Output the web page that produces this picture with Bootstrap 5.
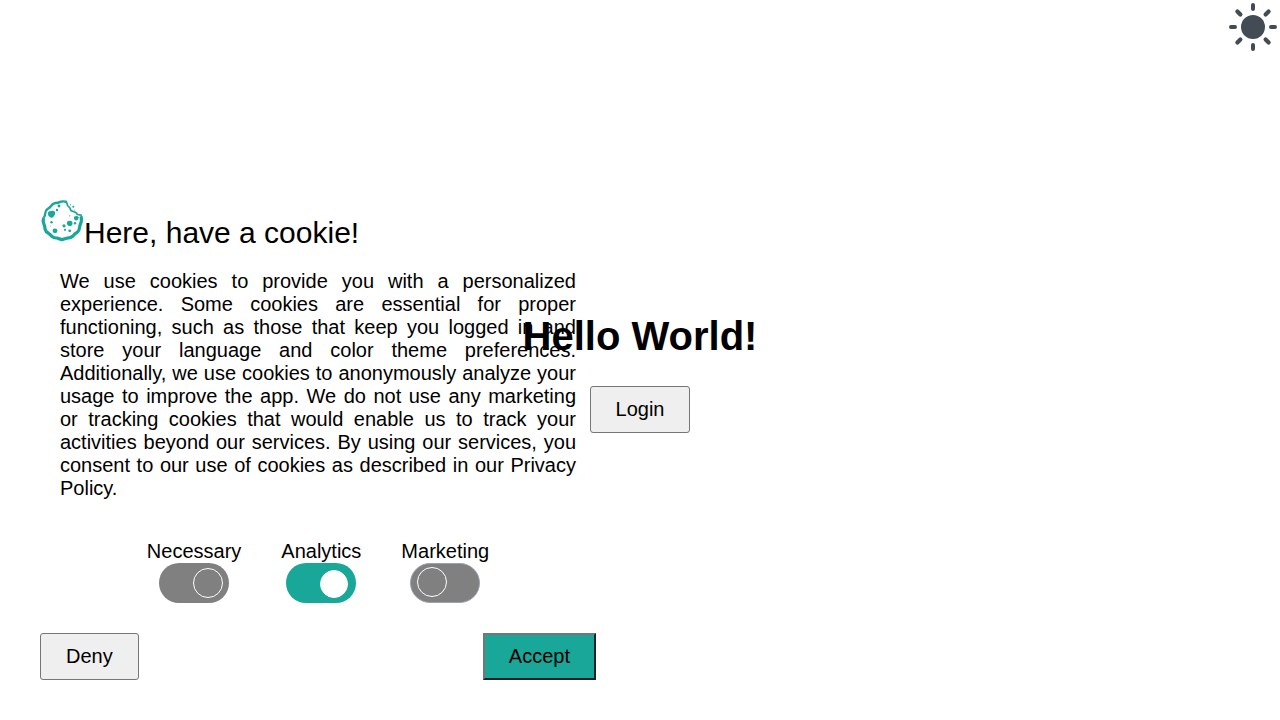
<!DOCTYPE html>
<html lang="en">
<head>
<meta charset="utf-8">
<meta name="viewport" content="width=device-width, initial-scale=1">
<title>Hello World</title>
<link href="https://cdn.jsdelivr.net/npm/bootstrap@5.3.0/dist/css/bootstrap.min.css" rel="stylesheet">
<style>
body { font-family: "Liberation Sans", Arial, sans-serif; font-size: 20px; line-height: 23px; color: #000; background: #fff; }
.theme-toggle { top: 3px; right: 3px; color: #434c54; line-height: 0; }
.hero { padding-top: 313px; }
.hero h1 { font-size: 40px; line-height: 46px; margin-bottom: 27px; }
.plain-btn { --bs-btn-font-size: 20px; --bs-btn-line-height: 23px; --bs-btn-padding-x: 25px; --bs-btn-padding-y: 11px; --bs-btn-border-radius: 3px; --bs-btn-bg: #efefef; --bs-btn-color: #000; --bs-btn-border-color: #767676; }
.accept-btn { --bs-btn-border-radius: 0; --bs-btn-padding-x: 24px; --bs-btn-padding-y: 10px; --bs-btn-bg: #18a798; border-width: 2px; border-color: #767676 #212121 #212121 #767676; }
.consent { left: 40px; bottom: 40px; width: 556px; }
.consent h2 { font-size: 30px; line-height: 34px; padding-top: 17px; }
.consent p { text-align: justify; padding: 0 20px; margin: 20px 0 40px; }
.consent-options { gap: 40px; margin-bottom: 30px; }
.pill { width: 70px; height: 40px; border-radius: 20px; background: #808080; padding: 5px 6px; }
.pill i { width: 30px; height: 30px; border: 1px solid #fff; border-radius: 50%; }
.pill-on { background: #18a798; padding-right: 8px; padding-top: 7px; }
.pill-on i { width: 28px; height: 28px; background: #fff; }
.pill-off { border: 1px solid #9ba4ad; padding: 3px 6px; }
</style>
</head>
<body>
<button class="theme-toggle position-absolute border-0 bg-transparent p-0" aria-label="Light theme">
<svg width="48" height="48" viewBox="-24 -24 48 48" fill="none" stroke="currentColor" stroke-width="4" stroke-linecap="round">
<circle r="12" fill="currentColor" stroke="none"/>
<path d="M0-22v4M0 18v4M-22 0h4M18 0h4"/>
<path stroke-width="4.2" d="M-15.6-15.6l3 3M12.6 12.6l3 3M-15.6 15.6l3-3M12.6-12.6l3-3"/>
</svg>
</button>
<main class="hero d-flex flex-column align-items-center">
<h1 class="fw-bold">Hello World!</h1>
<button class="btn plain-btn">Login</button>
</main>
<section class="consent position-absolute">
<div class="d-flex align-items-start">
<svg width="44" height="44" viewBox="0 0 44 44" class="flex-shrink-0" fill="none" stroke="#18a798" stroke-linejoin="round">
<path stroke-width="2.4" d="M27 3Q24 1.9 21 2.6Q18 4 15.5 4Q12.5 4.6 11 7Q9.5 9 7.5 10Q5.3 11.5 5.2 14.5Q5 17 3.7 19"/>
<path stroke-width="3.2" d="M3.7 19Q2.4 22 3.9 25Q5 27.5 5 30Q5.8 33 8.5 34.3Q10.5 35.5 12 37.4Q14 39 17 39Q19.5 40 22 40.6Q25 40 27.5 39.1Q31 39 33 37Q34.5 34.7 37 33.5Q39.5 31.5 39.5 28.5Q40 25.5 41.2 23Q41.8 20 41 17.5"/>
<path stroke-width="1.7" d="M26 2.8Q27.5 4 27.5 6.5L30 9Q30.2 12 33 12.5L36 13.5 37.4 15.5 41 16.2 41.5 19"/>
<g fill="#18a798" stroke="none">
<path d="M8.2 13Q9 12 11 12Q13.5 11.1 15.1 13Q15.5 15 14.2 16.7Q13 19.2 10.5 18.5Q7.8 17.5 8 15Z"/>
<path d="M27.2 22.5Q30 21 32.3 22.8Q33.2 26.2 30.5 27.2Q28 27.4 26.8 25Z"/>
<path d="M34.3 17.5Q37 16.2 38.7 18Q38.7 21.2 36 21.6Q33.3 21 34.3 17.5Z"/>
<circle cx="15" cy="31.8" r="2.4"/><circle cx="19" cy="7" r="1.4"/><circle cx="17" cy="11" r="1.2"/>
<circle cx="11.5" cy="23.2" r="1.2"/><circle cx="24" cy="26.8" r="1.6"/><circle cx="25" cy="30.8" r="1.1"/>
<circle cx="29.7" cy="31.8" r="1.4"/><circle cx="35" cy="24.3" r="1.2"/><circle cx="33.3" cy="7.7" r="1"/>
<circle cx="30.5" cy="5.8" r=".6"/><circle cx="34.2" cy="11" r=".6"/><circle cx="29.7" cy="16.8" r=".6"/><circle cx="10.5" cy="27" r=".4"/>
</g>
</svg>
<h2 class="fw-normal mb-0">Here, have a cookie!</h2>
</div>
<p>We use cookies to provide you with a personalized experience. Some cookies are essential for proper functioning, such as those that keep you logged in and store your language and color theme preferences. Additionally, we use cookies to anonymously analyze your usage to improve the app. We do not use any marketing or tracking cookies that would enable us to track your activities beyond our services. By using our services, you consent to our use of cookies as described in our Privacy Policy.</p>
<div class="consent-options d-flex justify-content-center">
<div class="d-flex flex-column align-items-center"><span>Necessary</span><span class="pill d-flex justify-content-end"><i></i></span></div>
<div class="d-flex flex-column align-items-center"><span>Analytics</span><span class="pill pill-on d-flex justify-content-end"><i></i></span></div>
<div class="d-flex flex-column align-items-center"><span>Marketing</span><span class="pill pill-off d-flex"><i></i></span></div>
</div>
<div class="d-flex justify-content-between">
<button class="btn plain-btn">Deny</button>
<button class="btn plain-btn accept-btn">Accept</button>
</div>
</section>
<script src="https://cdn.jsdelivr.net/npm/bootstrap@5.3.0/dist/js/bootstrap.bundle.min.js"></script>
</body>
</html>
